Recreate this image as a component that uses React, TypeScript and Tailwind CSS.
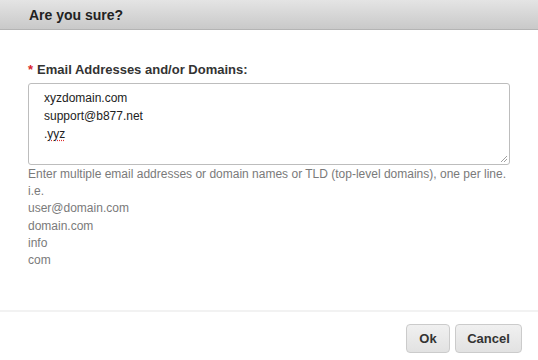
import React from "react";

const helpLines = [
  "Enter multiple email addresses or domain names or TLD (top-level domains), one per line.",
  "i.e.",
  "user@domain.com",
  "domain.com",
  "info",
  "com",
];

const App: React.FC = () => {
  return (
    <div
      className="w-[538px] h-[360px] bg-white flex flex-col overflow-hidden"
      style={{ fontFamily: '"Liberation Sans", Arial, sans-serif' }}
    >
      {/* Header */}
      <div className="h-[30px] shrink-0 bg-gradient-to-b from-[#e4e4e4] to-[#c9c9c9] border-b border-[#b4b4b4] flex items-center pl-[29px]">
        <h2 className="text-[14px] font-bold text-[#222] leading-none">Are you sure?</h2>
      </div>

      {/* Body */}
      <div className="h-[280px] shrink-0 px-[28px] pt-[32px]">
        <label className="block text-[13px] leading-[16px] font-bold text-[#333] mb-[5px]">
          <span className="text-[#d9252a] mr-[4px]">*</span>
          Email Addresses and/or Domains:
        </label>
        <div className="relative w-[482px] h-[82px] border border-[#bdbdbd] rounded-[3px] pl-[15px] pt-[5px] text-[12px] leading-[18px] text-[#222]">
          <div>xyzdomain.com</div>
          <div>support@b877.net</div>
          <div>
            .<span className="underline decoration-dotted decoration-[#e03030] underline-offset-2">yyz</span>
          </div>
          <svg
            className="absolute right-[1px] bottom-[1px]"
            width="8"
            height="8"
            viewBox="0 0 8 8"
          >
            <path d="M7 1 L1 7 M7 4 L4 7" stroke="#a0a0a0" strokeWidth="1" fill="none" />
          </svg>
        </div>
        <div className="text-[12px] leading-[17.2px] text-[#7a7a7a] pt-[1px]">
          {helpLines.map((line) => (
            <div key={line}>{line}</div>
          ))}
        </div>
      </div>

      {/* Footer */}
      <div className="flex-1 border-t-2 border-[#f2f2f2] flex justify-end items-start pt-[12px] pr-[16px] gap-[5px]">
        <button className="h-[29px] w-[44px] rounded-[4px] border border-[#cbcbcb] bg-gradient-to-b from-[#f0f0f0] to-[#e2e2e2] text-[13px] font-bold text-[#333]">
          Ok
        </button>
        <button className="h-[29px] w-[67px] rounded-[4px] border border-[#cbcbcb] bg-gradient-to-b from-[#f0f0f0] to-[#e2e2e2] text-[13px] font-bold text-[#333]">
          Cancel
        </button>
      </div>
    </div>
  );
};

export default App;
